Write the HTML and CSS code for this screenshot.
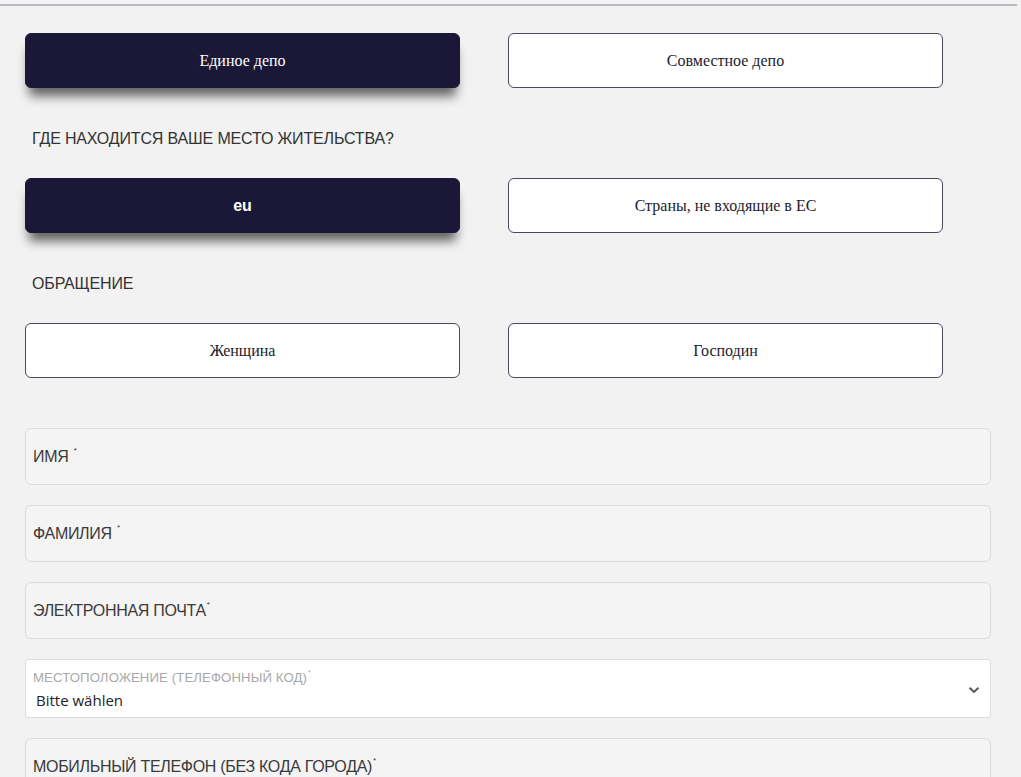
FILE: index.html
```html
<!DOCTYPE html>
<html lang="ru">
<head>
<meta charset="utf-8">
<title>Depot</title>
<link rel="stylesheet" href="styles.css">
</head>
<body>
<div class="page">
  <form class="form">
    <div class="choice-row">
      <button type="button" class="choice choice--active">Единое депо</button>
      <button type="button" class="choice">Совместное депо</button>
    </div>

    <div class="question">ГДЕ НАХОДИТСЯ ВАШЕ МЕСТО ЖИТЕЛЬСТВА?</div>
    <div class="choice-row">
      <button type="button" class="choice choice--active choice--sans">eu</button>
      <button type="button" class="choice">Страны, не входящие в ЕС</button>
    </div>

    <div class="question">ОБРАЩЕНИЕ</div>
    <div class="choice-row">
      <button type="button" class="choice">Женщина</button>
      <button type="button" class="choice">Господин</button>
    </div>

    <div class="fields">
      <div class="field"><span class="field-label">ИМЯ <sup>*</sup></span></div>
      <div class="field"><span class="field-label">ФАМИЛИЯ <sup>*</sup></span></div>
      <div class="field"><span class="field-label">ЭЛЕКТРОННАЯ ПОЧТА<sup>*</sup></span></div>
      <div class="select">
        <div class="select-text">
          <span class="select-label">МЕСТОПОЛОЖЕНИЕ (ТЕЛЕФОННЫЙ КОД)<sup>*</sup></span>
          <span class="select-value">Bitte wählen</span>
        </div>
        <svg class="chevron" width="12" height="8" viewBox="0 0 12 8"><path d="M1.5 1.8 L6 6 L10.5 1.8" fill="none" stroke="#555" stroke-width="2"/></svg>
      </div>
      <div class="field"><span class="field-label">МОБИЛЬНЫЙ ТЕЛЕФОН (БЕЗ КОДА ГОРОДА)<sup>*</sup></span></div>
    </div>
  </form>
</div>
</body>
</html>
```

FILE: styles.css
```css
html, body {
  margin: 0;
  padding: 0;
  background: #f2f2f2;
  overflow: hidden;
}

.page {
  margin-top: 4px;
  border-top: 2px solid #b9b9c2;
  width: 1017px;
  height: 771px;
  overflow: hidden;
}

.form {
  padding: 27px 30px 0 25px;
  display: flex;
  flex-direction: column;
}

.choice-row {
  display: flex;
  gap: 48px;
}

.choice {
  width: 435px;
  height: 55px;
  box-sizing: border-box;
  border: 1px solid #4a4a5a;
  border-radius: 6px;
  background: #ffffff;
  color: #1c1c2e;
  font-family: "Liberation Serif", serif;
  font-size: 16px;
  padding: 0;
  cursor: pointer;
}

.choice--active {
  background: #1a1836;
  border-color: #1a1836;
  color: #ffffff;
  box-shadow: 0 12px 11px -4px rgba(0, 0, 0, 0.6);
}

.choice--sans {
  font-family: "Liberation Sans", Arial, sans-serif;
  font-weight: bold;
  font-size: 16px;
}

.question {
  font-family: "Liberation Sans", Arial, sans-serif;
  font-size: 16px;
  letter-spacing: -0.15px;
  color: #333333;
  padding-left: 7px;
  padding-top: 12px;
  box-sizing: border-box;
  height: 90px;
  display: flex;
  align-items: center;
}

.fields {
  margin-top: 50px;
  display: flex;
  flex-direction: column;
  gap: 20px;
  width: 966px;
}

.field {
  height: 57px;
  box-sizing: border-box;
  border: 1px solid #dcdcdc;
  border-radius: 6px;
  background: #f4f4f4;
  display: flex;
  align-items: center;
  padding-left: 7px;
}

.field-label {
  font-family: "Liberation Sans", Arial, sans-serif;
  font-size: 16px;
  letter-spacing: -0.3px;
  color: #3a3a3a;
}

sup {
  font-size: 8px;
  vertical-align: top;
  position: relative;
  top: -2px;
  margin-left: 1px;
}

.select {
  height: 59px;
  box-sizing: border-box;
  border: 1px solid #dcdcdc;
  border-radius: 3px;
  background: #ffffff;
  display: flex;
  align-items: center;
  justify-content: space-between;
  padding: 0 10px 0 7px;
}

.select-text {
  display: flex;
  flex-direction: column;
  gap: 5px;
  padding-top: 2px;
}

.select-label {
  font-family: "Liberation Sans", Arial, sans-serif;
  font-size: 13.2px;
  letter-spacing: 0.1px;
  color: #a8a8a8;
}

.select-label sup {
  font-size: 7px;
  top: -1px;
  margin-left: 1px;
}

.select-value {
  font-family: "Open Sans", "Liberation Sans", sans-serif;
  font-size: 15px;
  color: #222222;
  padding-left: 3px;
}

.chevron {
  display: block;
  margin-top: 2px;
}
```
